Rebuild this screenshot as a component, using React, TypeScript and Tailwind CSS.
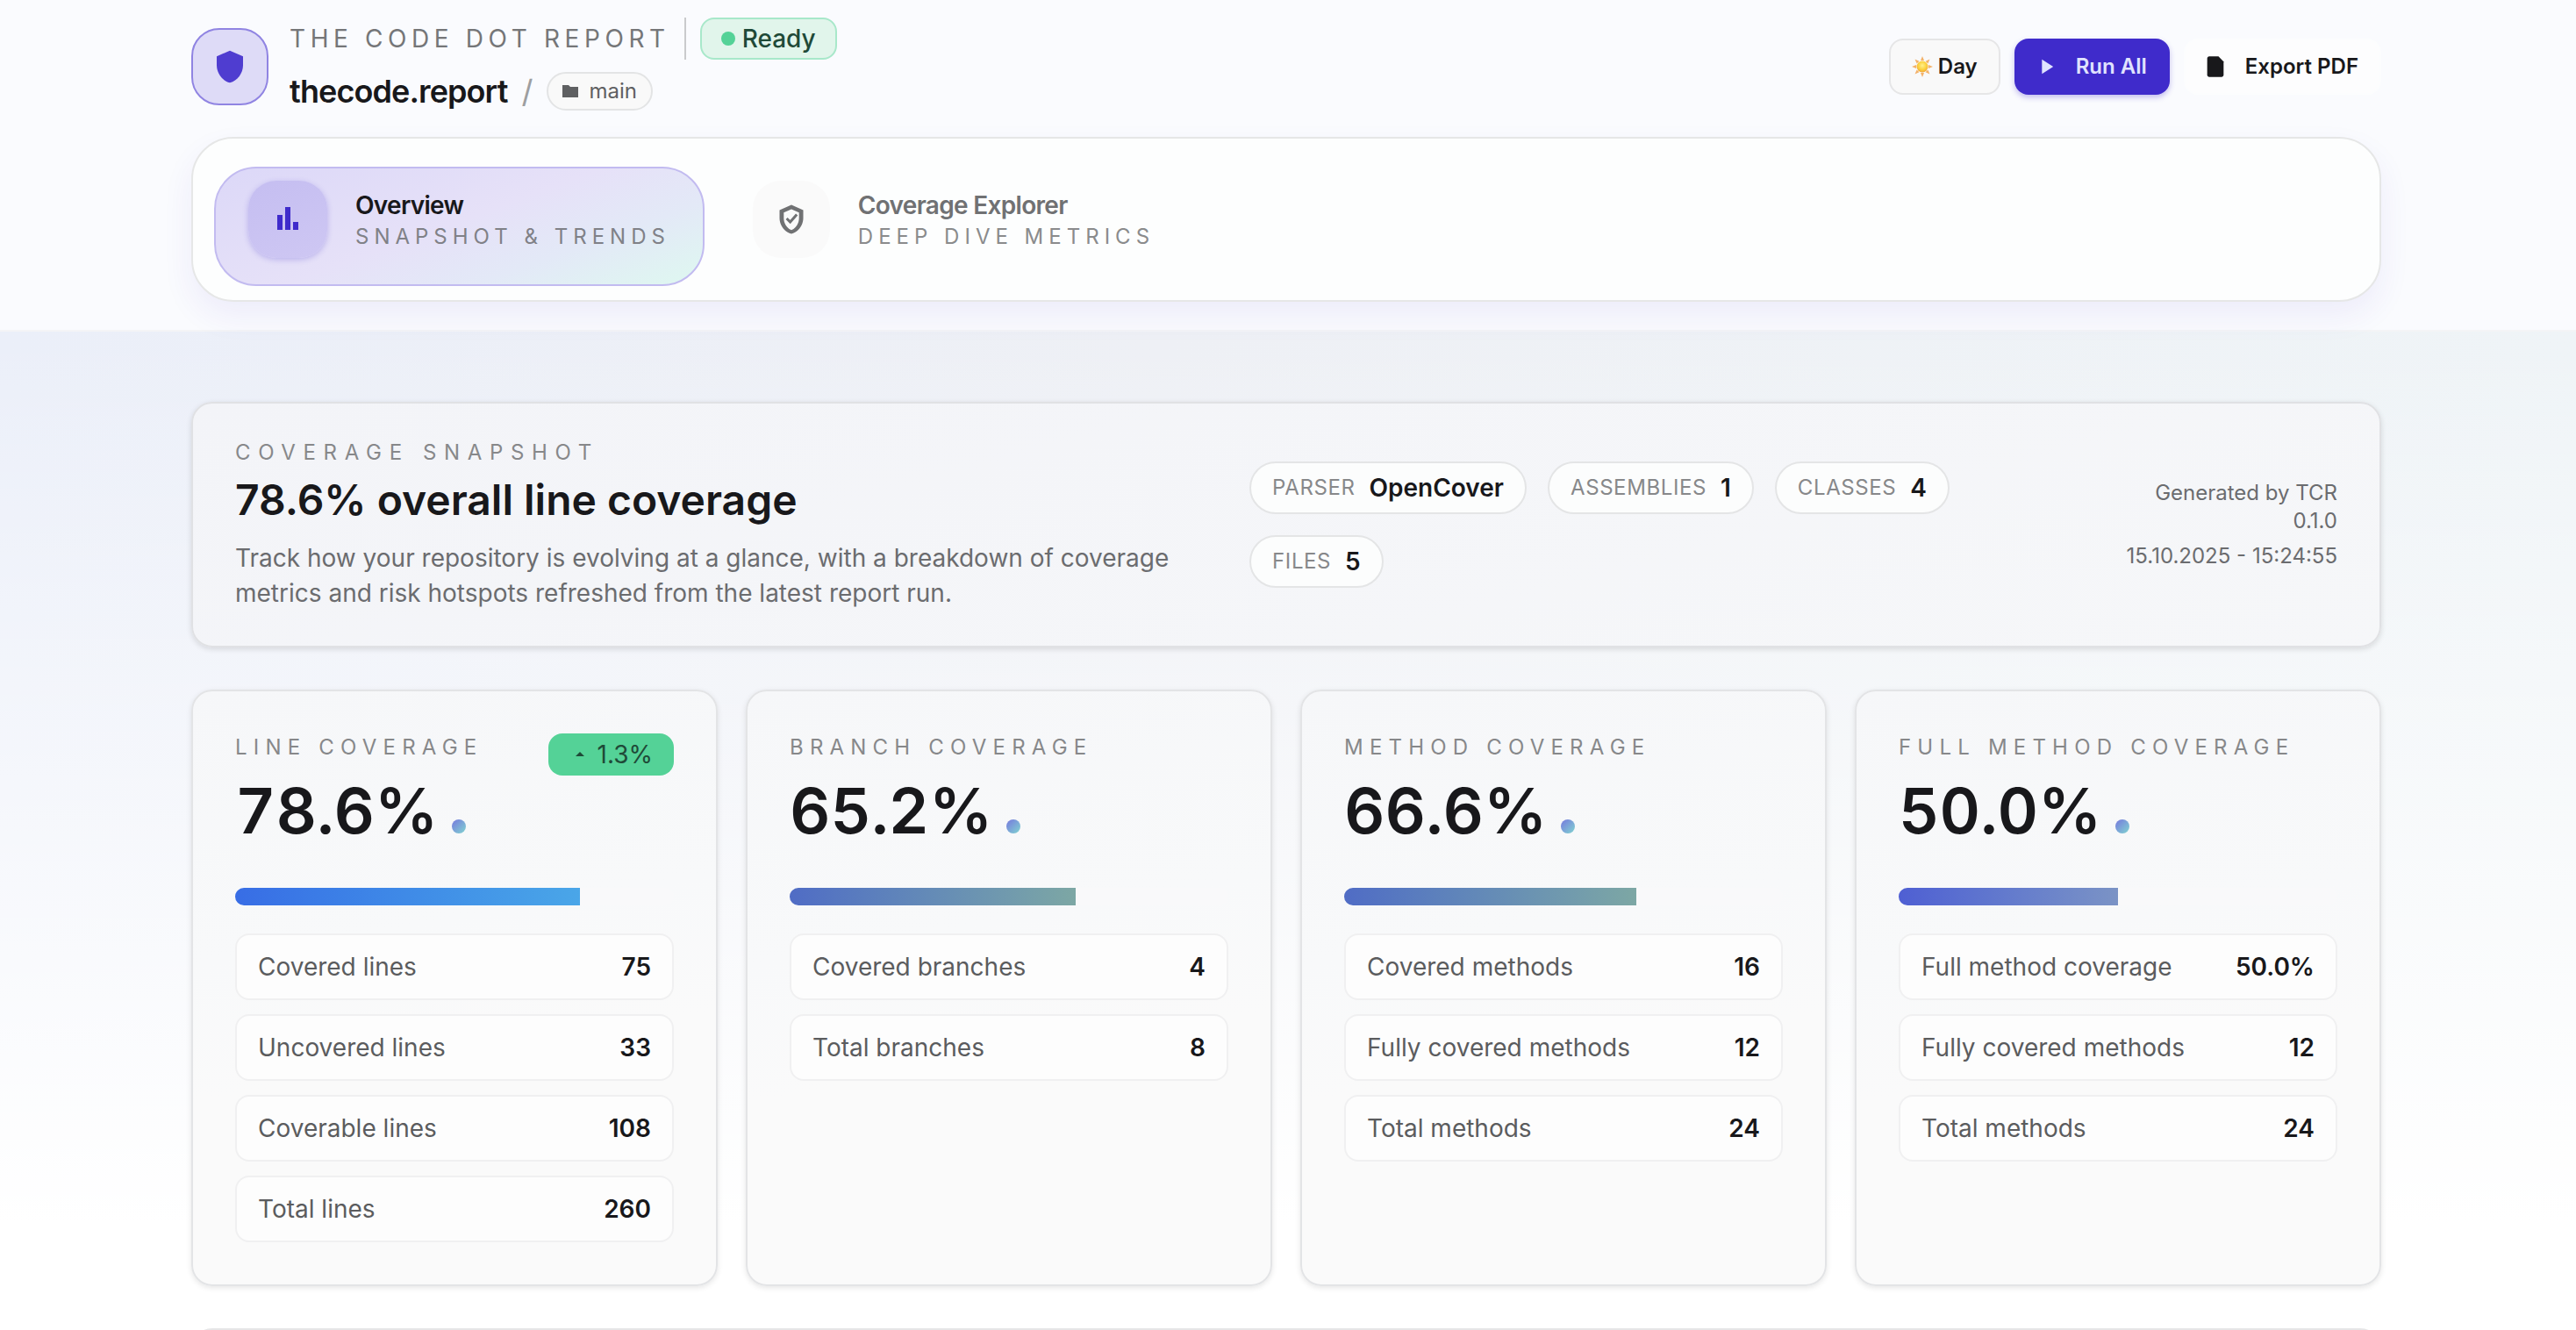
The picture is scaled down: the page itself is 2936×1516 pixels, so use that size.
import type { ReactNode } from "react";
import { MdPlayArrow, MdShield, MdArrowDropUp } from "react-icons/md";

type Stat = { label: string; value: string };
type Metric = { title: string; percent: number; fill: string; delta?: string; stats: Stat[] };

const metrics: Metric[] = [
  {
    title: "Line coverage",
    percent: 78.6,
    fill: "bg-linear-to-r from-[#386de5] to-[#4aa6e8]",
    delta: "1.3%",
    stats: [
      { label: "Covered lines", value: "75" },
      { label: "Uncovered lines", value: "33" },
      { label: "Coverable lines", value: "108" },
      { label: "Total lines", value: "260" },
    ],
  },
  {
    title: "Branch coverage",
    percent: 65.2,
    fill: "bg-linear-to-r from-[#506cc5] to-[#7da7a4]",
    stats: [
      { label: "Covered branches", value: "4" },
      { label: "Total branches", value: "8" },
    ],
  },
  {
    title: "Method coverage",
    percent: 66.6,
    fill: "bg-linear-to-r from-[#506cc5] to-[#7da7a4]",
    stats: [
      { label: "Covered methods", value: "16" },
      { label: "Fully covered methods", value: "12" },
      { label: "Total methods", value: "24" },
    ],
  },
  {
    title: "Full method coverage",
    percent: 50,
    fill: "bg-linear-to-r from-[#4f5fd3] to-[#7b93c5]",
    stats: [
      { label: "Full method coverage", value: "50.0%" },
      { label: "Fully covered methods", value: "12" },
      { label: "Total methods", value: "24" },
    ],
  },
];

const facts: Stat[] = [
  { label: "Parser", value: "OpenCover" },
  { label: "Assemblies", value: "1" },
  { label: "Classes", value: "4" },
  { label: "Files", value: "5" },
];

function FolderIcon() {
  return (
    <svg viewBox="0 0 18 14" className="h-3.5 w-[18px]" fill="currentColor" aria-hidden="true">
      <path d="M0 0h7l2 2h9v12H0z" />
    </svg>
  );
}

function SunIcon() {
  return (
    <svg viewBox="0 0 24 24" className="size-6" aria-hidden="true">
      <defs>
        <radialGradient id="sun" cx="50%" cy="40%" r="60%">
          <stop offset="0" stopColor="#fff08a" />
          <stop offset="0.6" stopColor="#fbd13e" />
          <stop offset="1" stopColor="#f0a53a" />
        </radialGradient>
      </defs>
      <g fill="#f3b26a">
        {[0, 45, 90, 135, 180, 225, 270, 315].map((angle) => (
          <path key={angle} d="M12 0l2 5h-4z" transform={`rotate(${angle} 12 12)`} />
        ))}
      </g>
      <circle cx="12" cy="12" r="6.5" fill="url(#sun)" />
    </svg>
  );
}

function FileIcon() {
  return (
    <svg viewBox="0 0 24 24" className="size-7" fill="currentColor" aria-hidden="true">
      <path d="M6 2c-1.100 0-2 .9-2 2v16c0 1.100.9 2 2 2h12c1.100 0 2-.9 2-2V7l-5-5z" />
    </svg>
  );
}

function BarsIcon() {
  return (
    <svg viewBox="0 0 24 28" className="h-7 w-6" fill="currentColor" aria-hidden="true">
      <path d="M0 9h6v17H0zM9 0h6v26H9zM18 17h6v9h-6z" />
    </svg>
  );
}

function ShieldCheckIcon() {
  return (
    <svg viewBox="0 0 24 24" className="size-9" fill="currentColor" aria-hidden="true">
      <path
        fillRule="evenodd"
        d="M12 1L3 5v6c0 5.550 3.840 10.740 9 12 5.160-1.260 9-6.450 9-12V5zM12 4.300l5.800 2.500v4.200c0 4-2.400 7.900-5.800 9.200-3.400-1.300-5.800-5.200-5.800-9.200V6.800z"
      />
      <path d="M8.400 11.300l2.700 2.700 5-5.600" fill="none" stroke="currentColor" strokeWidth="2" />
    </svg>
  );
}

function Tab({ active, icon, title, caption }: { active?: boolean; icon: ReactNode; title: string; caption: string }) {
  return (
    <button
      type="button"
      role="tab"
      aria-selected={!!active}
      className={
        active
          ? "flex items-start gap-8 rounded-[48px] border-2 border-[#c2bbf0] bg-[linear-gradient(160deg,#dcd8f8_0%,#e6e1f8_48%,#e3e9f7_72%,#def8f0_100%)] px-[37px] pt-3.5 pb-[30px] text-left"
          : "flex items-start gap-8 rounded-[48px] border-2 border-transparent px-[37px] pt-3.5 pb-[30px] text-left"
      }
    >
      <span
        className={
          active
            ? "flex h-[88px] w-[90px] items-center justify-center rounded-[32px] bg-[linear-gradient(160deg,#c5bef1,#cec7f3)] text-[#3f2bcb] shadow-[0_2px_6px_#4030cc40]"
            : "flex size-[88px] items-center justify-center rounded-[32px] bg-[#fafafa] text-[#707173]"
        }
      >
        {icon}
      </span>
      <span className="flex flex-col pt-2.5">
        <span
          className={
            active
              ? "text-[28px] leading-9 font-semibold tracking-tight text-[#18181b]"
              : "text-[28px] leading-9 font-semibold tracking-tight text-[#707173]"
          }
        >
          {title}
        </span>
        <span
          className={
            active
              ? "text-2xl leading-9 tracking-[0.25em] text-[#808187] uppercase"
              : "text-2xl leading-9 tracking-[0.25em] text-[#8a8b8c] uppercase"
          }
        >
          {caption}
        </span>
      </span>
    </button>
  );
}

function MetricCard({ metric }: { metric: Metric }) {
  return (
    <section className="rounded-3xl border-2 border-[#e3e4e6] bg-[linear-gradient(170deg,#f6f7f9_0%,#f8f9fa_40%,#fafafa_60%)] p-12 shadow-[0_2px_6px_#0000001a]">
      <div className="flex h-8 items-start justify-between">
        <h2 className="text-2xl leading-8 tracking-[0.3em] whitespace-nowrap text-[#87888a] uppercase">{metric.title}</h2>
        {metric.delta && (
          <span className="flex h-12 items-center gap-2 rounded-2xl bg-[#54d297] px-6 text-[28px] text-[#1f4a38]">
            <MdArrowDropUp className="size-6" aria-hidden="true" />
            {metric.delta}
          </span>
        )}
      </div>
      <div className="mt-4 flex items-baseline gap-4">
        <strong className="text-[72px] leading-[80px] font-semibold text-[#18181b] tabular-nums">
          {metric.percent.toFixed(1)}%
        </strong>
        <span className="size-4 rounded-full bg-linear-to-br from-[#7676dc] to-[#80d4cf]" />
      </div>
      <div className="mt-12 h-5 overflow-hidden rounded-full bg-[#f9f9fa]">
        <div className={`h-full ${metric.fill}`} style={{ width: `${metric.percent}%` }} />
      </div>
      <dl className="mt-8 flex flex-col gap-4">
        {metric.stats.map((stat) => (
          <div
            key={stat.label}
            className="flex h-[76px] items-center justify-between rounded-2xl border-2 border-[#f0f0f1] bg-[#fdfdfd] px-6 text-[28px]"
          >
            <dt className="text-[#5b5c5e]">{stat.label}</dt>
            <dd className="font-semibold text-[#18181b]">{stat.value}</dd>
          </div>
        ))}
      </dl>
    </section>
  );
}

export default function App() {
  return (
    <div className="h-screen overflow-hidden bg-[linear-gradient(180deg,#ffffff00_0%,#ffffff00_25%,#ffffff_92%),linear-gradient(90deg,#ebeff9_0%,#eef0f5_45%,#eff4f7_100%)] font-['Inter',sans-serif] text-[#18181b]">
      <header className="border-b-2 border-[#f4f4f6] bg-[#fafbfe] pr-1">
        <div className="mx-auto max-w-[2496px]">
          <div className="flex items-center justify-between pt-5 pb-6">
            <div className="flex items-center gap-6">
              <div className="flex size-[88px] items-center justify-center rounded-[32px] border-2 border-[#9084e2] bg-[#dedbf7] text-[#4f3dd0]">
                <MdShield className="size-10" aria-hidden="true" />
              </div>
              <div className="flex h-28 flex-col gap-3">
                <div className="flex h-12 items-center">
                  <span className="text-[28px] tracking-[0.2em] text-[#757678] uppercase">The Code Dot Report</span>
                  <span className="ml-4 h-12 w-0.5 bg-[#c9cacc]" />
                  <span className="ml-4 flex h-12 items-center gap-2 rounded-2xl border-2 border-[#a8e8ca] bg-[#e1f5eb] px-[22px] text-[28px] font-medium text-[#1f4a38]">
                    <span className="size-4 rounded-full bg-[#54d297]" />
                    Ready
                  </span>
                </div>
                <div className="flex h-12 items-center">
                  <h1 className="text-4xl font-semibold tracking-tight">thecode.report</h1>
                  <span className="mx-4 text-4xl text-[#9d9ea0]">/</span>
                  <span className="flex h-11 items-center gap-3 rounded-full border-2 border-[#e3e4e5] bg-[#f9f9f9] px-4 text-2xl text-[#5f6062]">
                    <FolderIcon />
                    main
                  </span>
                </div>
              </div>
            </div>
            <div className="flex items-center gap-4 text-2xl font-semibold">
              <button
                type="button"
                className="flex h-16 items-center gap-1.5 rounded-2xl border-2 border-[#e6e6e7] bg-[#f9f9f9] px-6"
              >
                <SunIcon />
                Day
              </button>
              <button
                type="button"
                className="flex h-16 items-center gap-5 rounded-2xl bg-[#3f2bcb] pr-[26px] pl-[22px] text-[#e0e3ff] shadow-[0_3px_6px_#3f2bcb4d]"
              >
                <MdPlayArrow className="size-7" aria-hidden="true" />
                Run All
              </button>
              <button
                type="button"
                className="flex h-16 items-center gap-5 rounded-2xl border-2 border-[#fcfdfe] bg-[#fdfdfe] pr-6 pl-5"
              >
                <FileIcon />
                Export PDF
              </button>
            </div>
          </div>
          <nav
            role="tablist"
            aria-label="Report sections"
            className="mb-8 flex items-start gap-4 rounded-[48px] border-2 border-[#e6e7e7] bg-[#fdfefe] px-6 pt-8 pb-4 shadow-[0_16px_36px_#4030cc12]"
          >
            <Tab active icon={<BarsIcon />} title="Overview" caption="Snapshot & trends" />
            <Tab icon={<ShieldCheckIcon />} title="Coverage Explorer" caption="Deep dive metrics" />
          </nav>
        </div>
      </header>

      <main className="pt-20 pr-1">
        <div className="mx-auto flex max-w-[2496px] flex-col gap-12">
          <section className="grid grid-cols-[minmax(0,20fr)_minmax(0,17fr)_250px] items-center gap-12 rounded-3xl border-2 border-[#e0e1e4] bg-[linear-gradient(165deg,#f3f4f8,#f6f7f9)] px-12 py-10 shadow-[0_2px_6px_#0000001f]">
            <div>
              <p className="text-2xl leading-8 tracking-[0.36em] text-[#87888a] uppercase">Coverage snapshot</p>
              <h2 className="mt-2 text-5xl leading-[60px] font-semibold">78.6% overall line coverage</h2>
              <p className="mt-4 text-[28px] leading-10 text-[#6b6c6f]">
                Track how your repository is evolving at a glance, with a breakdown of coverage metrics and risk hotspots
                refreshed from the latest report run.
              </p>
            </div>
            <ul className="flex flex-wrap gap-6">
              {facts.map((fact) => (
                <li
                  key={fact.label}
                  className="flex h-[60px] items-center gap-4 rounded-full border-2 border-[#e4e5e6] bg-[#fcfdfd] px-6"
                >
                  <span className="text-2xl tracking-wide text-[#87888a] uppercase">{fact.label}</span>
                  <span className="text-[28px] font-semibold">{fact.value}</span>
                </li>
              ))}
            </ul>
            <div className="flex flex-col gap-2 text-right text-2xl leading-8 text-[#6b6c6f]">
              <p>Generated by TCR 0.1.0</p>
              <p>15.10.2025 - 15:24:55</p>
            </div>
          </section>

          <div className="grid grid-cols-4 gap-8">
            {metrics.map((metric) => (
              <MetricCard key={metric.title} metric={metric} />
            ))}
          </div>

          <section className="h-40 rounded-3xl border-2 border-[#e6e6e7] bg-[#fafafa]" />
        </div>
      </main>
    </div>
  );
}
